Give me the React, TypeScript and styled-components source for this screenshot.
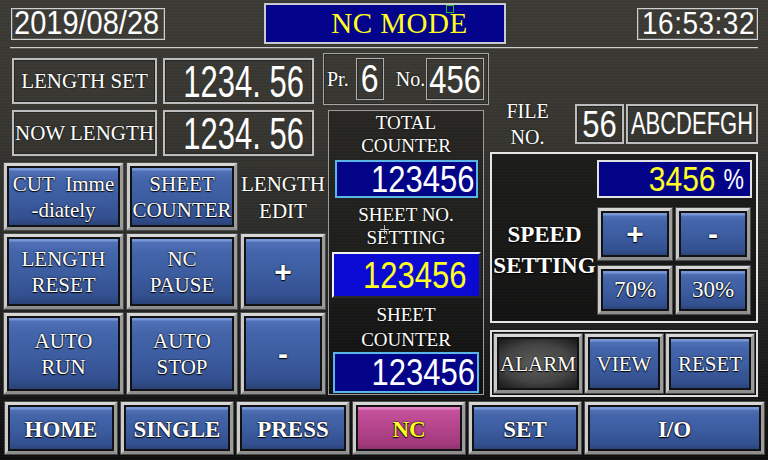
import React from 'react';
import styled, {createGlobalStyle, css} from 'styled-components';

const SERIF = `'Liberation Serif', 'Times New Roman', serif`;
const SANS = `'Liberation Sans', Arial, sans-serif`;

const GlobalStyle = createGlobalStyle`
  html, body {
    margin: 0;
    padding: 0;
    background: #000;
  }
  #root {
    width: 768px;
    height: 460px;
  }
`;

const Screen = styled.div`
  width: 768px;
  height: 460px;
  overflow: hidden;
  box-sizing: border-box;
  display: flex;
  flex-direction: column;
  color: #fff;
  font-family: ${SERIF};
  background:
    repeating-linear-gradient(0deg, rgba(255, 255, 255, 0.025) 0 1px, transparent 1px 3px),
    linear-gradient(180deg, #3b3a35 0%, #35342f 30%, #2a2a28 55%, #1b1b1b 78%, #0c0c0c 100%);
`;

/* ---------- header ---------- */

const Header = styled.header`
  display: grid;
  grid-template-columns: 1fr 242px 1fr;
  align-items: center;
  height: 41px;
  margin-top: 3px;
  padding: 0 10px 0 11px;
`;

const ClockBox = styled.div<{$align: 'start' | 'end'; $width: number}>`
  justify-self: ${(p) => p.$align};
  box-sizing: border-box;
  width: ${(p) => p.$width}px;
  height: 32px;
  display: flex;
  align-items: center;
  justify-content: ${(p) => (p.$align === 'start' ? 'flex-start' : 'flex-end')};
  padding: 0 2px;
  border: 1px solid #cfcfcf;
  box-shadow: inset 0 0 0 1px #5e5e5a;
`;

const ModeBox = styled.div`
  position: relative;
  box-sizing: border-box;
  height: 41px;
  display: flex;
  align-items: center;
  justify-content: center;
  padding-left: 30px;
  background: #03038c;
  border: 2px solid #c9c9d2;
  color: #ffff1a;
  font-size: 29px;
  letter-spacing: 0.5px;
`;

const CursorMark = styled.span`
  position: absolute;
  left: 180px;
  top: 0;
  width: 6px;
  height: 6px;
  border: 1px solid #22c022;
`;

const Rule = styled.div`
  height: 2px;
  margin: 3px 10px 0;
  background: linear-gradient(180deg, #cfcfcf 0 1px, #5a5a56 1px);
`;

/* ---------- shared bits ---------- */

// the panel uses a tall, narrow digit face: a normal sans stretched upward
const Digits = styled.span<{$size: number; $stretch: number; $color?: string; $spacing?: number}>`
  display: inline-block;
  font-family: ${SANS};
  font-size: ${(p) => p.$size}px;
  letter-spacing: ${(p) => p.$spacing || 0}px;
  line-height: 1;
  white-space: pre;
  color: ${(p) => p.$color || '#fff'};
  transform: scaleY(${(p) => p.$stretch});
`;

const Frame = styled.div<{$width: number; $height: number; $justify?: string; $pad?: number; $gap?: number}>`
  box-sizing: border-box;
  flex-shrink: 0;
  width: ${(p) => p.$width}px;
  height: ${(p) => p.$height}px;
  margin-left: ${(p) => p.$gap || 0}px;
  display: flex;
  align-items: center;
  justify-content: ${(p) => p.$justify || 'center'};
  padding-right: ${(p) => p.$pad || 0}px;
  border: 2px solid #bdbdbd;
  box-shadow: inset 0 0 0 1px #262624;
`;

const FrameLabel = styled.span`
  font-size: 21px;
  text-shadow: 0 0 2px #000;
  white-space: nowrap;
`;

type Tone = 'blue' | 'pink' | 'grey';

const toneBg = {
  blue: css`
    background: linear-gradient(
      180deg,
      #7896d6 0,
      #7896d6 4px,
      #5071b7 5px,
      #4465aa 22%,
      #3c5ca0 55%,
      #33508f 85%,
      #283f72 100%
    );
  `,
  pink: css`
    background: linear-gradient(180deg, #e382c1 0, #e382c1 4px, #c4529c 5px, #b6468e 45%, #a23a7c 85%, #862e66 100%);
  `,
  grey: css`
    background: radial-gradient(ellipse 75% 65% at 50% 50%, #5e5e5c 0%, #444 55%, #232323 85%, #151515 100%);
  `,
};

const Btn = styled.div<{$tone?: Tone; $width?: number; $bold?: boolean; $size?: number}>`
  box-sizing: border-box;
  ${(p) => (p.$width ? `width: ${p.$width}px; flex-shrink: 0;` : 'flex: 1;')}
  display: flex;
  align-items: center;
  justify-content: center;
  text-align: center;
  white-space: pre-line;
  border: 3px solid #bcbcbc;
  border-color: #d6d6d6 #9c9c9c #8e8e8e #cacaca;
  box-shadow: inset 0 0 0 2px #121212, 0 0 0 1px #4a4a48;
  ${(p) => toneBg[p.$tone || 'blue']}
  color: ${(p) => (p.$tone === 'pink' ? '#ffff22' : '#fff')};
  font-family: ${SERIF};
  font-size: ${(p) => p.$size || 21}px;
  font-weight: ${(p) => (p.$bold ? 700 : 400)};
  line-height: 26px;
  text-shadow: 0 1px 1px #000, 0 0 2px #000;
`;

const Sign = styled.span`
  font-family: ${SANS};
  font-weight: 700;
  font-size: 30px;
  line-height: 1;
`;

/* ---------- main area ---------- */

const Main = styled.main`
  display: flex;
  height: 345px;
  margin-top: 4px;
  padding-left: 4px;
`;

const LeftCol = styled.section`
  width: 319px;
  flex-shrink: 0;
  display: flex;
  flex-direction: column;
`;

const ReadRow = styled.div<{$top: number}>`
  display: flex;
  gap: 6px;
  padding-left: 8px;
  margin-top: ${(p) => p.$top}px;
`;

const ButtonGrid = styled.div`
  width: 321px;
  margin-top: 7px;
  display: grid;
  grid-template-columns: 119px 110px 84px;
  grid-template-rows: 67px 75px 81px;
  gap: 4px;
`;

const GridLabel = styled.div`
  display: flex;
  align-items: center;
  justify-content: center;
  text-align: center;
  font-size: 21px;
  line-height: 27px;
  padding-top: 3px;
  text-shadow: 0 0 2px #000;
`;

const CenterCol = styled.section`
  width: 166px;
  flex-shrink: 0;
  display: flex;
  flex-direction: column;
`;

const PrGroup = styled.div`
  box-sizing: border-box;
  height: 52px;
  display: flex;
  align-items: center;
  padding-left: 3px;
  border: 1px solid #a4a4a4;
  box-shadow: inset 0 0 0 1px #2a2a28;
`;

const PrLabel = styled.span<{$left: number}>`
  margin-left: ${(p) => p.$left}px;
  font-size: 20px;
  text-shadow: 0 0 2px #000;
`;

const PrBox = styled.div<{$width: number; $left: number}>`
  box-sizing: border-box;
  width: ${(p) => p.$width}px;
  height: 42px;
  margin-left: ${(p) => p.$left}px;
  display: flex;
  align-items: center;
  justify-content: center;
  border: 1px solid #b0b0b0;
  box-shadow: inset 0 0 0 1px #2a2a28;
`;

const CounterPanel = styled.div`
  position: relative;
  box-sizing: border-box;
  width: 156px;
  height: 285px;
  margin: 5px 5px 0;
  display: flex;
  flex-direction: column;
  align-items: center;
  border: 1px solid #9c9c9c;
  background: rgba(0, 0, 0, 0.28);
`;

// small touch-cursor crosshair that sits over the SETTING caption
const Crosshair = styled.span`
  position: absolute;
  left: 51px;
  top: 114px;
  width: 9px;
  height: 9px;
  background:
    linear-gradient(#b8b8b8, #b8b8b8) center / 9px 1px no-repeat,
    linear-gradient(#b8b8b8, #b8b8b8) center / 1px 9px no-repeat;
`;

const CounterTitle = styled.div<{$top: number; $lh: number}>`
  margin-top: ${(p) => p.$top}px;
  font-size: 19px;
  line-height: ${(p) => p.$lh}px;
  text-align: center;
  text-shadow: 0 0 2px #000;
`;

type DisplayKind = 'cyan' | 'bright' | 'white';

const displayKinds = {
  cyan: css`
    background: #030388;
    border: 2px solid #5ab6e6;
  `,
  bright: css`
    background: #0a0ad2;
    border: 2px solid;
    border-color: #f2f2f2 #2a2a2a #2a2a2a #f2f2f2;
  `,
  white: css`
    background: #030388;
    border: 2px solid #e2e2e2;
  `,
};

const Display = styled.div<{$kind: DisplayKind; $width: number; $height: number; $top: number; $pad: number}>`
  box-sizing: border-box;
  flex-shrink: 0;
  width: ${(p) => p.$width}px;
  height: ${(p) => p.$height}px;
  margin-top: ${(p) => p.$top}px;
  display: flex;
  align-items: center;
  justify-content: flex-end;
  padding-right: ${(p) => p.$pad}px;
  ${(p) => displayKinds[p.$kind]}
`;

const RightCol = styled.section`
  width: 268px;
  flex-shrink: 0;
  margin-left: 1px;
  display: flex;
  flex-direction: column;
`;

const FileRow = styled.div`
  height: 48px;
  margin-top: 47px;
  display: flex;
  align-items: center;
`;

const FileLabel = styled.div`
  width: 45px;
  margin: 0 25px 0 15px;
  font-size: 20px;
  line-height: 26px;
  text-align: center;
  text-shadow: 0 0 2px #000;
`;

const SpeedPanel = styled.div`
  box-sizing: border-box;
  height: 171px;
  margin-top: 4px;
  display: grid;
  grid-template-columns: 105px 1fr;
  grid-template-rows: 46px 1fr;
  border: 2px solid #e6e6e6;
  background: rgba(0, 0, 0, 0.42);
`;

const SpeedReadout = styled(Display)`
  grid-column: 2;
  grid-row: 1;
`;

const Percent = styled(Digits)`
  margin-left: 8px;
`;

const SpeedLabel = styled.div`
  grid-column: 1;
  grid-row: 2;
  display: flex;
  align-items: center;
  justify-content: center;
  padding-bottom: 22px;
  font-size: 23px;
  font-weight: 700;
  line-height: 31px;
  text-align: center;
  text-shadow: 0 0 2px #000, 0 1px 1px #000;
`;

const SpeedGrid = styled.div`
  grid-column: 2;
  grid-row: 2;
  margin: 8px 0 0 1px;
  display: grid;
  grid-template-columns: 74px 74px;
  grid-template-rows: 52px 48px;
  column-gap: 4px;
  row-gap: 6px;
  align-self: start;
`;

const AlarmPanel = styled.div`
  box-sizing: border-box;
  height: 67px;
  margin-top: 7px;
  padding: 2px;
  display: flex;
  gap: 3px;
  border: 2px solid #dedede;
  background: #0b0b0b;
`;

/* ---------- bottom nav ---------- */

const Nav = styled.nav`
  display: flex;
  gap: 4px;
  height: 52px;
  margin-top: 4px;
  padding: 0 4px 0 5px;
`;

const NavBtn = styled(Btn)`
  padding-top: 3px;
`;

const navItems = ['HOME', 'SINGLE', 'PRESS', 'NC', 'SET'];

const App = (): JSX.Element => {
  return (
    <Screen>
      <GlobalStyle />
      <Header>
        <ClockBox $align="start" $width={154}>
          <Digits $size={29} $stretch={1.14}>
            2019/08/28
          </Digits>
        </ClockBox>
        <ModeBox>
          NC MODE
          <CursorMark />
        </ModeBox>
        <ClockBox $align="end" $width={121}>
          <Digits $size={28} $stretch={1.1} $spacing={0.5}>
            16:53:32
          </Digits>
        </ClockBox>
      </Header>
      <Rule />

      <Main>
        <LeftCol>
          <ReadRow $top={5}>
            <Frame $width={145} $height={46}>
              <FrameLabel>LENGTH SET</FrameLabel>
            </Frame>
            <Frame $width={151} $height={46} $justify="flex-end" $pad={8}>
              <Digits $size={31} $stretch={1.44}>
                1234. 56
              </Digits>
            </Frame>
          </ReadRow>
          <ReadRow $top={6}>
            <Frame $width={145} $height={46}>
              <FrameLabel>NOW LENGTH</FrameLabel>
            </Frame>
            <Frame $width={151} $height={46} $justify="flex-end" $pad={8}>
              <Digits $size={31} $stretch={1.44}>
                1234. 56
              </Digits>
            </Frame>
          </ReadRow>

          <ButtonGrid>
            <Btn>{'CUT\u00a0\u00a0Imme\n-diately'}</Btn>
            <Btn>{'SHEET\nCOUNTER'}</Btn>
            <GridLabel>
              LENGTH
              <br />
              EDIT
            </GridLabel>
            <Btn>{'LENGTH\nRESET'}</Btn>
            <Btn>{'NC\nPAUSE'}</Btn>
            <Btn>
              <Sign>+</Sign>
            </Btn>
            <Btn>{'AUTO\nRUN'}</Btn>
            <Btn>{'AUTO\nSTOP'}</Btn>
            <Btn>
              <Sign>-</Sign>
            </Btn>
          </ButtonGrid>
        </LeftCol>

        <CenterCol>
          <PrGroup>
            <PrLabel $left={0}>Pr.</PrLabel>
            <PrBox $width={28} $left={7}>
              <Digits $size={32} $stretch={1.22}>
                6
              </Digits>
            </PrBox>
            <PrLabel $left={12}>No.</PrLabel>
            <PrBox $width={58} $left={1}>
              <Digits $size={31} $stretch={1.26}>
                456
              </Digits>
            </PrBox>
          </PrGroup>

          <CounterPanel>
            <CounterTitle $top={0} $lh={23}>
              TOTAL
              <br />
              COUNTER
            </CounterTitle>
            <Display $kind="cyan" $width={143} $height={38} $top={3} $pad={1}>
              <Digits $size={31} $stretch={1.17}>
                123456
              </Digits>
            </Display>
            <CounterTitle $top={5} $lh={23}>
              SHEET NO.
              <br />
              SETTING
            </CounterTitle>
            <Display $kind="bright" $width={149} $height={46} $top={3} $pad={12}>
              <Digits $size={31} $stretch={1.17} $color="#ffff22">
                123456
              </Digits>
            </Display>
            <CounterTitle $top={4} $lh={25}>
              SHEET
              <br />
              COUNTER
            </CounterTitle>
            <Display $kind="cyan" $width={146} $height={41} $top={0} $pad={2}>
              <Digits $size={31} $stretch={1.17}>
                123456
              </Digits>
            </Display>
            <Crosshair />
          </CounterPanel>
        </CenterCol>

        <RightCol>
          <FileRow>
            <FileLabel>
              FILE
              <br />
              NO.
            </FileLabel>
            <Frame $width={49} $height={40}>
              <Digits $size={31} $stretch={1.22}>
                56
              </Digits>
            </Frame>
            <Frame $width={132} $height={40} $gap={2}>
              <Digits $size={22} $stretch={1.4}>
                ABCDEFGH
              </Digits>
            </Frame>
          </FileRow>

          <SpeedPanel>
            <SpeedReadout $kind="white" $width={155} $height={38} $top={6} $pad={6}>
              <Digits $size={30} $stretch={1.16} $color="#ffff22">
                3456
              </Digits>
              <Percent $size={23} $stretch={1.3}>
                %
              </Percent>
            </SpeedReadout>
            <SpeedLabel>
              SPEED
              <br />
              SETTING
            </SpeedLabel>
            <SpeedGrid>
              <Btn>
                <Sign>+</Sign>
              </Btn>
              <Btn>
                <Sign>-</Sign>
              </Btn>
              <Btn $size={23}>70%</Btn>
              <Btn $size={23}>30%</Btn>
            </SpeedGrid>
          </SpeedPanel>

          <AlarmPanel>
            <Btn $tone="grey" $width={88}>
              ALARM
            </Btn>
            <Btn $width={78}>VIEW</Btn>
            <Btn>RESET</Btn>
          </AlarmPanel>
        </RightCol>
      </Main>

      <Nav>
        {navItems.map((item) => (
          <NavBtn key={item} $width={112} $bold $size={23} $tone={item === 'NC' ? 'pink' : 'blue'}>
            {item}
          </NavBtn>
        ))}
        <NavBtn $bold $size={23}>
          I/O
        </NavBtn>
      </Nav>
    </Screen>
  );
};

export default App;
